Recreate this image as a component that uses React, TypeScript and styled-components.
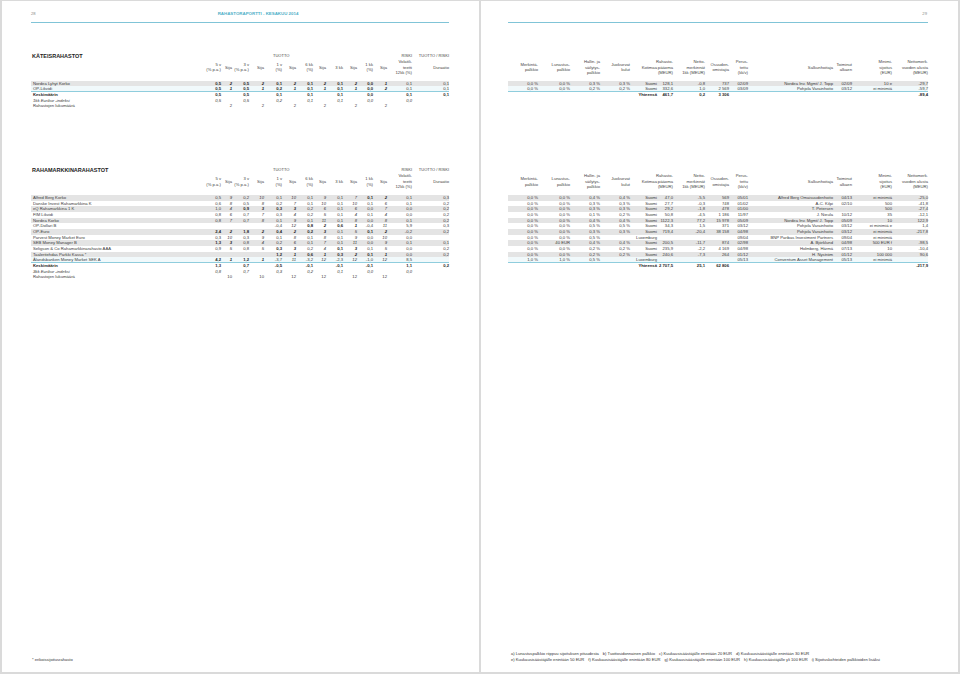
import React from 'react';
import styled, { createGlobalStyle } from 'styled-components';

const GlobalStyle = createGlobalStyle`
  html, body { margin: 0; padding: 0; background: #dadada; }
  body { font-family: "Liberation Sans", Arial, sans-serif; color: #333; }
`;

const LEFT_COLS = '169px 21px 11px 17px 15px 18px 14px 17px 13px 17px 14px 16px 14px 25px 37px';
const RIGHT_COLS = '30px 32px 30px 30px 27px 16px 32px 24px 19px 85px 19px 40px 36px';
const ROW_H = 5.66;

const Spread = styled.div`
  display: flex;
  gap: 2px;
  padding: 1px 2px 2px 2px;
  width: 960px;
  height: 674px;
  box-sizing: border-box;
`;

const Page = styled.div<{ $side: 'left' | 'right' }>`
  flex: 0 0 477px;
  height: 671px;
  background: #fff;
  display: flex;
  flex-direction: column;
  box-sizing: border-box;
  padding: 10px 30px 9px ${(p) => (p.$side === 'left' ? 29 : 27)}px;
`;

const RunningHead = styled.div<{ $side: 'left' | 'right' }>`
  height: 6px;
  display: flex;
  align-items: center;
  justify-content: ${(p) => (p.$side === 'left' ? 'flex-start' : 'flex-end')};
  font-size: 4.2px;
  line-height: 6px;
  padding-right: ${(p) => (p.$side === 'left' ? 0 : 1)}px;
`;

const PageNo = styled.span`
  color: #8c8c8c;
`;

const HeadTitle = styled.span`
  margin-left: 182px;
  color: #4fb0c8;
  font-weight: 700;
  font-size: 4.4px;
`;

const Rule = styled.div`
  margin-top: 5px;
  height: 1.3px;
  background: #80c4d7;
`;

const Section = styled.section<{ $top: number }>`
  margin-top: ${(p) => p.$top}px;
  font-size: 4.2px;
`;

const Grid = styled.div<{ $cols: string }>`
  display: grid;
  grid-template-columns: ${(p) => p.$cols};
  align-items: center;
`;

const TitleRow = styled(Grid)`
  height: 7px;
`;

const SectionTitle = styled.div`
  font-size: 5.5px;
  font-weight: 700;
  color: #222;
  white-space: nowrap;
  padding-left: 1px;
`;

const GroupLabel = styled.div<{ $col: string; $align: 'left' | 'right'; $shift?: number }>`
  grid-column: ${(p) => p.$col};
  text-align: ${(p) => p.$align};
  padding-left: ${(p) => p.$shift ?? 0}px;
  white-space: nowrap;
  color: #444;
  font-size: 4px;
`;

const HeaderRow = styled(Grid)`
  height: 16px;
  color: #444;
`;

const HeadCell = styled.div<{ $align: 'left' | 'right' | 'center' }>`
  display: flex;
  justify-content: ${(p) =>
    p.$align === 'left' ? 'flex-start' : p.$align === 'center' ? 'center' : 'flex-end'};
  white-space: nowrap;
  min-width: 0;
  line-height: 5.5px;
  text-align: ${(p) => p.$align};
`;

const Body = styled.div<{ $rows: number }>`
  margin-top: 5.5px;
  height: ${(p) => p.$rows * ROW_H}px;
`;

type RowTone = 'band' | 'plain' | 'last';

const Row = styled(Grid)<{ $tone: RowTone }>`
  height: ${ROW_H}px;
  line-height: ${ROW_H}px;
  box-sizing: border-box;
  background: ${(p) => (p.$tone === 'band' ? '#e4e4e4' : p.$tone === 'last' ? '#f1f9fb' : 'transparent')};
  border-bottom: ${(p) => (p.$tone === 'last' ? '0.8px solid #8fcddd' : 'none')};
`;

const Cell = styled.div<{ $align: 'left' | 'right' | 'center'; $bold?: boolean; $italic?: boolean }>`
  display: flex;
  justify-content: ${(p) =>
    p.$align === 'left' ? 'flex-start' : p.$align === 'center' ? 'center' : 'flex-end'};
  white-space: nowrap;
  min-width: 0;
  font-weight: ${(p) => (p.$bold ? 700 : 400)};
  font-style: ${(p) => (p.$italic ? 'italic' : 'normal')};
  color: ${(p) => (p.$bold ? '#1e1e1e' : '#3a3a3a')};
`;

const NameCell = styled(Cell)`
  padding-left: 2px;
`;

const Footer = styled.div<{ $side: 'left' | 'right' }>`
  margin-top: auto;
  font-size: 4.1px;
  line-height: 6px;
  color: #333;
  padding-left: ${(p) => (p.$side === 'left' ? 1 : 3)}px;
`;

const NoteLine = styled.div`
  white-space: nowrap;
`;

const Note = styled.span`
  margin-right: 4px;
`;

/* ---------- data ---------- */

type Pair = [string, string];
type LeftRow = {
  name: string;
  kind: 'fund' | 'avg' | 'index' | 'count';
  pairs: Pair[];
  vol?: string;
  dur?: string;
};

const kateisLeft: LeftRow[] = [
  { name: 'Nordea Lyhyt Korko', kind: 'fund', pairs: [['0,5', '2'], ['0,5', '2'], ['0,1', '2'], ['0,1', '2'], ['0,1', '2'], ['0,0', '1']], vol: '0,1', dur: '0,1' },
  { name: 'OP-Likvidi', kind: 'fund', pairs: [['0,5', '1'], ['0,5', '1'], ['0,2', '1'], ['0,1', '1'], ['0,1', '1'], ['0,0', '2']], vol: '0,1', dur: '0,1' },
  { name: 'Keskimäärin', kind: 'avg', pairs: [['0,5', ''], ['0,5', ''], ['0,1', ''], ['0,1', ''], ['0,1', ''], ['0,0', '']], vol: '0,1', dur: '0,1' },
  { name: '1kk Euribor -indeksi', kind: 'index', pairs: [['0,5', ''], ['0,5', ''], ['0,2', ''], ['0,1', ''], ['0,1', ''], ['0,0', '']], vol: '0,0', dur: '' },
  { name: 'Rahastojen lukumäärä', kind: 'count', pairs: [['', '2'], ['', '2'], ['', '2'], ['', '2'], ['', '2'], ['', '2']] },
];

const rahamLeft: LeftRow[] = [
  { name: 'Alfred Berg Korko', kind: 'fund', pairs: [['0,5', '9'], ['0,2', '10'], ['0,1', '10'], ['0,1', '9'], ['0,1', '7'], ['0,1', '2']], vol: '0,1', dur: '0,3' },
  { name: 'Danske Invest Rahamarkkina K', kind: 'fund', pairs: [['0,6', '8'], ['0,5', '8'], ['0,2', '7'], ['0,1', '10'], ['0,1', '10'], ['0,1', '6']], vol: '0,1', dur: '0,2' },
  { name: 'eQ Rahamarkkina 1 K', kind: 'fund', pairs: [['1,0', '4'], ['0,9', '3'], ['0,3', '3'], ['0,2', '6'], ['0,1', '6'], ['0,0', '7']], vol: '0,0', dur: '0,2' },
  { name: 'FIM Likvidi', kind: 'fund', pairs: [['0,8', '6'], ['0,7', '7'], ['0,3', '4'], ['0,2', '5'], ['0,1', '4'], ['0,1', '4']], vol: '0,0', dur: '0,2' },
  { name: 'Nordea Korko', kind: 'fund', pairs: [['0,8', '7'], ['0,7', '8'], ['0,1', '9'], ['0,1', '11'], ['0,1', '8'], ['0,0', '8']], vol: '0,1', dur: '0,2' },
  { name: 'OP-Dollari B', kind: 'fund', pairs: [['', ''], ['', ''], ['-0,4', '12'], ['0,8', '2'], ['0,6', '1'], ['-0,4', '11']], vol: '5,9', dur: '0,3' },
  { name: 'OP-Euro', kind: 'fund', pairs: [['2,4', '2'], ['1,8', '2'], ['0,4', '2'], ['0,2', '3'], ['0,1', '5'], ['0,1', '2']], vol: '-0,2', dur: '0,2' },
  { name: 'Parvest Money Market Euro', kind: 'fund', pairs: [['0,3', '10'], ['0,3', '9'], ['0,1', '8'], ['0,1', '8'], ['0,1', '9'], ['0,0', '10']], vol: '0,0', dur: '' },
  { name: 'SEB Money Manager B', kind: 'fund', pairs: [['1,3', '3'], ['0,8', '4'], ['0,2', '6'], ['0,1', '7'], ['0,1', '11'], ['0,0', '9']], vol: '0,1', dur: '0,1' },
  { name: 'Seligson & Co Rahamarkkinarahasto AAA', kind: 'fund', pairs: [['0,9', '5'], ['0,8', '5'], ['0,3', '3'], ['0,2', '4'], ['0,1', '3'], ['0,1', '5']], vol: '0,0', dur: '0,2' },
  { name: 'Taaleritehdas Parkki Kassa *', kind: 'fund', pairs: [['', ''], ['', ''], ['1,2', '1'], ['0,6', '1'], ['0,3', '2'], ['0,1', '1']], vol: '0,0', dur: '0,2' },
  { name: 'Ålandsbanken Money Market SEK A', kind: 'fund', pairs: [['4,2', '1'], ['1,2', '1'], ['-3,7', '11'], ['-3,2', '12'], ['-2,3', '12'], ['-1,0', '12']], vol: '8,5', dur: '' },
  { name: 'Keskimäärin', kind: 'avg', pairs: [['1,3', ''], ['0,7', ''], ['-0,5', ''], ['-0,1', ''], ['-0,1', ''], ['-0,1', '']], vol: '1,1', dur: '0,2' },
  { name: '3kk Euribor -indeksi', kind: 'index', pairs: [['0,8', ''], ['0,7', ''], ['0,3', ''], ['0,2', ''], ['0,1', ''], ['0,0', '']], vol: '0,0', dur: '' },
  { name: 'Rahastojen lukumäärä', kind: 'count', pairs: [['', '10'], ['', '10'], ['', '12'], ['', '12'], ['', '12'], ['', '12']] },
];

type RightRow = { cells: string[]; total?: boolean };

const kateisRight: RightRow[] = [
  { cells: ['0,0 %', '0,0 %', '0,3 %', '0,3 %', 'Suomi', '128,1', '-0,8', '737', '02/09', 'Nordea Inv. Mgmt/ J. Topp', '02/09', '10 e', '-29,7'] },
  { cells: ['0,0 %', '0,0 %', '0,2 %', '0,2 %', 'Suomi', '332,6', '1,0', '2 569', '03/09', 'Pohjola Varainhoito', '03/12', 'ei minimiä', '-59,7'] },
  { cells: ['', '', '', '', 'Yhteensä', '461,7', '0,2', '3 306', '', '', '', '', '-89,4'], total: true },
];

const rahamRight: RightRow[] = [
  { cells: ['0,0 %', '0,0 %', '0,4 %', '0,4 %', 'Suomi', '47,0', '-5,5', '569', '05/01', 'Alfred Berg Omaisuudenhoito', '04/13', 'ei minimiä', '-25,0'] },
  { cells: ['0,0 %', '0,0 %', '0,3 %', '0,3 %', 'Suomi', '27,7', '-0,3', '748', '01/02', 'A-C. Kilpi', '02/10', '500', '-41,8'] },
  { cells: ['0,0 %', '0,0 %', '0,3 %', '0,3 %', 'Suomi', '29,2', '-1,8', '478', '01/00', 'T. Petersen', '', '500', '-27,4'] },
  { cells: ['0,0 %', '0,0 %', '0,1 %', '0,2 %', 'Suomi', '50,8', '-4,5', '1 186', '11/97', 'J. Nieula', '10/12', '35', '-12,1'] },
  { cells: ['0,0 %', '0,0 %', '0,4 %', '0,4 %', 'Suomi', '1122,3', '77,2', '15 978', '05/09', 'Nordea Inv. Mgmt/ J. Topp', '05/09', '10', '122,9'] },
  { cells: ['0,0 %', '0,0 %', '0,5 %', '0,5 %', 'Suomi', '34,3', '1,5', '371', '03/12', 'Pohjola Varainhoito', '03/12', 'ei minimiä e', '1,4'] },
  { cells: ['0,0 %', '0,0 %', '0,3 %', '0,3 %', 'Suomi', '719,4', '-20,4', '38 158', '04/98', 'Pohjola Varainhoito', '03/12', 'ei minimiä', '-217,8'] },
  { cells: ['0,0 %', '0,0 %', '0,5 %', '', 'Luxemburg', '', '', '', '09/04', 'BNP Paribas Investment Partners', '09/04', 'ei minimiä', ''] },
  { cells: ['0,0 %', '40 EUR', '0,4 %', '0,4 %', 'Suomi', '200,5', '-11,7', '874', '02/98', 'A. Björklund', '04/98', '500 EUR f', '-98,5'] },
  { cells: ['0,0 %', '0,0 %', '0,2 %', '0,2 %', 'Suomi', '235,9', '-2,2', '4 169', '04/98', 'Holmberg, Härmä', '07/13', '10', '-10,4'] },
  { cells: ['0,0 %', '0,0 %', '0,2 %', '0,2 %', 'Suomi', '240,6', '-7,3', '264', '01/12', 'H. Nyström', '01/12', '100 000', '90,6'] },
  { cells: ['1,0 %', '1,0 %', '0,5 %', '', 'Luxemburg', '', '', '', '05/13', 'Conventum Asset Management', '05/13', 'ei minimiä', ''] },
  { cells: ['', '', '', '', 'Yhteensä', '2 707,5', '25,1', '62 806', '', '', '', '', '-217,9'], total: true },
];

const leftHeads: { lines: string[]; align: 'left' | 'right' | 'center' }[] = [
  { lines: [''], align: 'left' },
  { lines: ['5 v', '(% p.a.)'], align: 'right' },
  { lines: ['Sija'], align: 'right' },
  { lines: ['3 v', '(% p.a.)'], align: 'right' },
  { lines: ['Sija'], align: 'right' },
  { lines: ['1 v', '(%)'], align: 'right' },
  { lines: ['Sija'], align: 'right' },
  { lines: ['6 kk', '(%)'], align: 'right' },
  { lines: ['Sija'], align: 'right' },
  { lines: ['3 kk'], align: 'right' },
  { lines: ['Sija'], align: 'right' },
  { lines: ['1 kk', '(%)'], align: 'right' },
  { lines: ['Sija'], align: 'right' },
  { lines: ['Volatili-', 'teetti', '12kk (%)'], align: 'right' },
  { lines: ['Duraatio'], align: 'right' },
];

const rightHeads: string[][] = [
  ['Merkintä-', 'palkkio'],
  ['Lunastus-', 'palkkio'],
  ['Hallin. ja', 'säilytys-', 'palkkio'],
  ['Juoksevat', 'kulut'],
  ['Kotimaa'],
  ['Rahasto-', 'pääoma', '(MEUR)'],
  ['Netto-', 'merkinnät', '1kk (MEUR)'],
  ['Osuuden-', 'omistajia'],
  ['Perus-', 'tettu', '(kk/v)'],
  ['Salkunhoitaja'],
  ['Toiminut', 'alkaen'],
  ['Minimi-', 'sijoitus', '(EUR)'],
  ['Nettomerk.', 'vuoden alusta', '(MEUR)'],
];

/* ---------- pieces ---------- */

const Lines: React.FC<{ lines: string[] }> = ({ lines }) => (
  <div>
    {lines.map((l, i) => (
      <React.Fragment key={i}>
        {i > 0 && <br />}
        {l}
      </React.Fragment>
    ))}
  </div>
);

const toneFor = (i: number, fundCount: number): RowTone =>
  i === fundCount - 1 ? 'last' : i < fundCount && i % 2 === 0 ? 'band' : 'plain';

const LeftTable: React.FC<{ title: string; rows: LeftRow[]; top: number }> = ({ title, rows, top }) => {
  const fundCount = rows.filter((r) => r.kind === 'fund').length;
  return (
    <Section $top={top}>
      <TitleRow $cols={LEFT_COLS}>
        <SectionTitle>{title}</SectionTitle>
        <GroupLabel $col="6 / span 7" $align="left" $shift={9}>TUOTTO</GroupLabel>
        <GroupLabel $col="14" $align="right">RISKI</GroupLabel>
        <GroupLabel $col="15" $align="right">TUOTTO / RISKI</GroupLabel>
      </TitleRow>
      <HeaderRow $cols={LEFT_COLS}>
        {leftHeads.map((h, i) => (
          <HeadCell key={i} $align={h.align}>
            <Lines lines={h.lines} />
          </HeadCell>
        ))}
      </HeaderRow>
      <Body $rows={rows.length}>
        {rows.map((r, i) => {
          const bold = r.kind === 'avg';
          const italic = r.kind === 'index';
          return (
            <Row key={i} $cols={LEFT_COLS} $tone={r.kind === 'fund' ? toneFor(i, fundCount) : 'plain'}>
              <NameCell $align="left" $bold={bold} $italic={italic}>{r.name}</NameCell>
              {r.pairs.map(([v, s], j) => {
                const top3 = r.kind === 'fund' && s !== '' && Number(s) <= 3;
                return (
                  <React.Fragment key={j}>
                    <Cell $align="right" $bold={bold || top3} $italic={italic}>{v}</Cell>
                    <Cell $align="right" $bold={top3} $italic={r.kind === 'fund'}>{s}</Cell>
                  </React.Fragment>
                );
              })}
              <Cell $align="right" $bold={bold} $italic={italic}>{r.vol ?? ''}</Cell>
              <Cell $align="right" $bold={bold} $italic={italic}>{r.dur ?? ''}</Cell>
            </Row>
          );
        })}
      </Body>
    </Section>
  );
};

const RightTable: React.FC<{ rows: RightRow[]; total: number; top: number }> = ({ rows, total, top }) => {
  const fundCount = rows.filter((r) => !r.total).length;
  return (
    <Section $top={top}>
      <TitleRow $cols={RIGHT_COLS} />
      <HeaderRow $cols={RIGHT_COLS}>
        {rightHeads.map((h, i) => (
          <HeadCell key={i} $align="right">
            <Lines lines={h} />
          </HeadCell>
        ))}
      </HeaderRow>
      <Body $rows={total}>
        {rows.map((r, i) => (
          <Row key={i} $cols={RIGHT_COLS} $tone={r.total ? 'plain' : toneFor(i, fundCount)}>
            {r.cells.map((c, j) => (
              <Cell key={j} $align="right" $bold={r.total}>{c}</Cell>
            ))}
          </Row>
        ))}
      </Body>
    </Section>
  );
};

export default function App() {
  return (
    <>
      <GlobalStyle />
      <Spread>
        <Page $side="left">
          <RunningHead $side="left">
            <PageNo>28</PageNo>
            <HeadTitle>RAHASTORAPORTTI - KESÄKUU 2014</HeadTitle>
          </RunningHead>
          <Rule />
          <LeftTable title="KÄTEISRAHASTOT" rows={kateisLeft} top={28.9} />
          <LeftTable title="RAHAMARKKINARAHASTOT" rows={rahamLeft} top={57.5} />
          <Footer $side="left">
            <NoteLine>* erikoissijoitusrahasto</NoteLine>
          </Footer>
        </Page>
        <Page $side="right">
          <RunningHead $side="right">
            <PageNo>29</PageNo>
          </RunningHead>
          <Rule />
          <RightTable rows={kateisRight} total={kateisLeft.length} top={28.9} />
          <RightTable rows={rahamRight} total={rahamLeft.length} top={57.5} />
          <Footer $side="right">
            <NoteLine>
              <Note>a) Lunastuspalkkio riippuu sijoituksen pituudesta</Note>
              <Note>b) Tuottosidonnainen palkkio</Note>
              <Note>c) Kuukausisäästäjälle enintään 20 EUR</Note>
              <Note>d) Kuukausisäästäjälle enintään 30 EUR</Note>
            </NoteLine>
            <NoteLine>
              <Note>e) Kuukausisäästäjälle enintään 50 EUR</Note>
              <Note>f) Kuukausisäästäjälle enintään 80 EUR</Note>
              <Note>g) Kuukausisäästäjälle enintään 100 EUR</Note>
              <Note>h) Kuukausisäästäjälle yli 100 EUR</Note>
              <Note>i) Sijoituskohteiden palkkioiden lisäksi</Note>
            </NoteLine>
          </Footer>
        </Page>
      </Spread>
    </>
  );
}
